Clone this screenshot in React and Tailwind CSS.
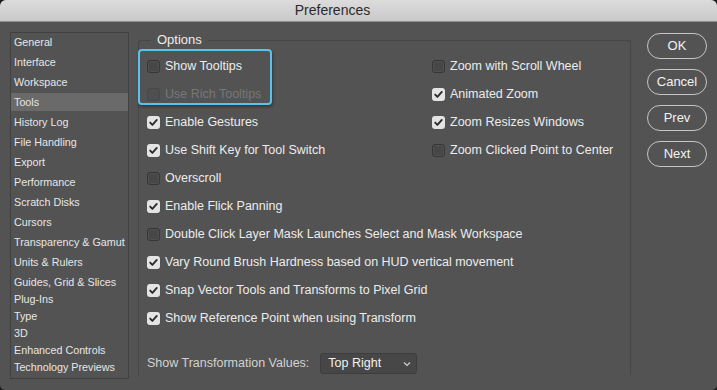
import React from "react";

const font = { fontFamily: '"Liberation Sans", Arial, sans-serif' };

function Box({ checked, disabled }) {
  if (disabled) {
    return (
      <span className="w-[13px] h-[13px] rounded-[3px] shrink-0 bg-[#4f4f4f] border border-[#484848]" />
    );
  }
  if (checked) {
    return (
      <span className="w-[13px] h-[13px] rounded-[3px] shrink-0 bg-[#e4e4e4] flex items-center justify-center">
        <svg width="13" height="13" viewBox="0 0 13 13">
          <path d="M3.2 6.6 L5.4 8.9 L9.8 3.9" fill="none" stroke="#2c2c2c" strokeWidth="1.9" strokeLinecap="round" strokeLinejoin="round" />
        </svg>
      </span>
    );
  }
  return (
    <span className="w-[13px] h-[13px] rounded-[3px] shrink-0 bg-[#474747] border border-[#363636] shadow-[inset_0_0_0_1px_#525252]" />
  );
}

function Row({ label, checked, disabled }) {
  return (
    <div className="h-[28px] flex items-center gap-[5px]">
      <Box checked={checked} disabled={disabled} />
      <span className={`text-[12.5px] leading-none whitespace-nowrap ${disabled ? "text-[#777777]" : "text-[#ececec]"}`}>{label}</span>
    </div>
  );
}

const side1 = ["General", "Interface", "Workspace", "Tools", "History Log", "File Handling", "Export", "Performance", "Scratch Disks", "Cursors", "Transparency & Gamut", "Units & Rulers"];
const side2 = ["Guides, Grid & Slices", "Plug-Ins", "Type", "3D", "Enhanced Controls", "Technology Previews"];

function Btn({ children }) {
  return (
    <div className="h-[26px] w-[60px] rounded-full border border-[#c6c6c6] flex items-center justify-center text-[13px] text-[#f2f2f2]">
      {children}
    </div>
  );
}

export default function App() {
  return (
    <div className="w-[717px] h-[390px] bg-[#1b1b1b] overflow-hidden" style={font}>
      <div className="w-full h-full bg-[#535353] rounded-t-[6px] rounded-b-[5px] overflow-hidden flex flex-col">
        <div className="h-[22px] shrink-0 bg-gradient-to-b from-[#dcdcdc] to-[#c9c9c9] border-b border-[#8e8e8e] flex items-center justify-center pr-[52px]">
          <span className="text-[14px] text-[#2b2b2b]">Preferences</span>
        </div>
        <div className="flex pt-[10px] pl-[10px]">
          <div className="w-[119px] h-[347px] border border-[#414141] flex flex-col pt-0">
            <div className="flex flex-col gap-[2px]">
              {side1.map((s) => (
                <div key={s} className={`h-[18px] flex items-center pl-[3px] text-[10.75px] text-[#e6e6e6] whitespace-nowrap ${s === "Tools" ? "bg-[#6a6a6a]" : ""}`}>
                  {s}
                </div>
              ))}
            </div>
            <div className="flex flex-col mt-[3px]">
              {side2.map((s) => (
                <div key={s} className="h-[17px] flex items-center pl-[3px] text-[10.75px] text-[#e6e6e6] whitespace-nowrap">
                  {s}
                </div>
              ))}
            </div>
          </div>

          <fieldset className="ml-[9px] w-[493px] h-[343px] border border-b-0 border-[#464646] rounded-t-[3px] relative pl-[8px] pt-[4px]">
            <legend className="ml-[4px] px-[6px] text-[13px] leading-[16px] text-[#ececec]">Options</legend>
            <div className="absolute left-[-1px] top-[1px] w-[134px] h-[56px] rounded-[4px] border-2 border-[#58c3ec] shadow-[1px_2px_3px_rgba(0,0,0,0.35)] pointer-events-none" />
            <div className="flex">
              <div className="w-[285px] flex flex-col">
                <Row label="Show Tooltips" />
                <Row label="Use Rich Tooltips" disabled />
                <Row label="Enable Gestures" checked />
                <Row label="Use Shift Key for Tool Switch" checked />
              </div>
              <div className="flex flex-col">
                <Row label="Zoom with Scroll Wheel" />
                <Row label="Animated Zoom" checked />
                <Row label="Zoom Resizes Windows" checked />
                <Row label="Zoom Clicked Point to Center" />
              </div>
            </div>
            <Row label="Overscroll" />
            <Row label="Enable Flick Panning" checked />
            <Row label="Double Click Layer Mask Launches Select and Mask Workspace" />
            <Row label="Vary Round Brush Hardness based on HUD vertical movement" checked />
            <Row label="Snap Vector Tools and Transforms to Pixel Grid" checked />
            <Row label="Show Reference Point when using Transform" checked />
            <div className="mt-[21px] flex items-center">
              <span className="text-[12.5px] text-[#d2d2d2] whitespace-nowrap">Show Transformation Values:</span>
              <div className="ml-[11px] w-[97px] h-[21px] bg-[#474747] border border-[#3d3d3d] rounded-[3px] flex items-center justify-between pl-[7px] pr-[5px]">
                <span className="text-[12.5px] text-[#f2f2f2]">Top Right</span>
                <svg width="8" height="6" viewBox="0 0 8 6">
                  <path d="M1 1.5 L4 4.5 L7 1.5" fill="none" stroke="#cfcfcf" strokeWidth="1.2" />
                </svg>
              </div>
            </div>
          </fieldset>

          <div className="ml-[16px] mt-[1px] flex flex-col gap-[10px]">
            <Btn>OK</Btn>
            <Btn>Cancel</Btn>
            <Btn>Prev</Btn>
            <Btn>Next</Btn>
          </div>
        </div>
      </div>
    </div>
  );
}
